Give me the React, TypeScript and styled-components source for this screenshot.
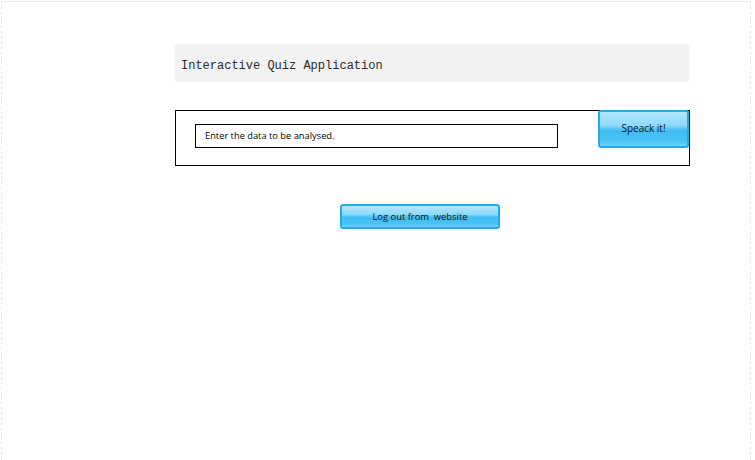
import * as React from 'react';
import styled, { createGlobalStyle } from 'styled-components';

const GlobalStyle = createGlobalStyle`
  html, body {
    margin: 0;
    padding: 0;
    background: #ffffff;
    overflow: hidden;
  }
  body {
    font-family: 'Open Sans', 'Liberation Sans', sans-serif;
  }
`;

const Frame = styled('div')`
  box-sizing: border-box;
  margin: 1px 0 0 1px;
  width: 750px;
  height: 459px;
  border-top: 1px solid #ececec;
  border-left: 1px dashed #e4e4e4;
  border-right: 1px dashed #e4e4e4;
  padding: 42px 0 0 173px;
`;

const Column = styled('div')`
  display: flex;
  flex-direction: column;
  width: 515px;
`;

const Header = styled('div')`
  display: flex;
  align-items: center;
  width: 514px;
  height: 38px;
  padding: 5px 0 0 6px;
  box-sizing: border-box;
  background: #f2f2f2;
  font-family: 'Liberation Mono', 'Courier New', monospace;
  font-size: 12px;
  color: #2a2a2a;
`;

const InputBox = styled('div')`
  display: flex;
  align-items: flex-start;
  box-sizing: border-box;
  margin-top: 28px;
  width: 515px;
  height: 56px;
  border: 1px solid #000000;
  padding: 13px 0 0 19px;
`;

const DataInput = styled('div')`
  box-sizing: border-box;
  display: flex;
  align-items: center;
  width: 363px;
  height: 24px;
  border: 1px solid #000000;
  padding: 0 0 1px 9px;
  font-size: 9.3px;
  color: #000000;
`;

const GlossButton = styled('button')<{ $w: number; $h: number; $fs: number }>`
  box-sizing: border-box;
  width: ${(p) => p.$w}px;
  height: ${(p) => p.$h}px;
  border: 2px solid #22aaea;
  border-radius: 3px;
  background: linear-gradient(
    to bottom,
    #b4e6fd 0%,
    #8ddafb 40%,
    #5cc9f6 48%,
    #3ebdf3 56%,
    #4ac3f6 85%,
    #70d1f9 100%
  );
  font-family: 'Open Sans', 'Liberation Sans', sans-serif;
  font-size: ${(p) => p.$fs}px;
  color: #111111;
  padding: 0;
  white-space: pre;
  cursor: pointer;
`;

const SpeakButton = styled(GlossButton)`
  margin: -14px 0 0 auto;
  padding-bottom: 2px;
`;

const LogoutButton = styled(GlossButton)`
  margin: 38px 0 0 165px;
  padding-bottom: 1px;
`;

const App = () => {
  return (
    <>
      <GlobalStyle />
      <Frame>
        <Column>
          <Header>Interactive Quiz Application</Header>
          <InputBox>
            <DataInput>Enter the data to be analysed.</DataInput>
            <SpeakButton $w={91} $h={38} $fs={10}>Speack it!</SpeakButton>
          </InputBox>
          <LogoutButton $w={160} $h={25} $fs={9.4}>Log out from  website</LogoutButton>
        </Column>
      </Frame>
    </>
  );
};

export default App;
